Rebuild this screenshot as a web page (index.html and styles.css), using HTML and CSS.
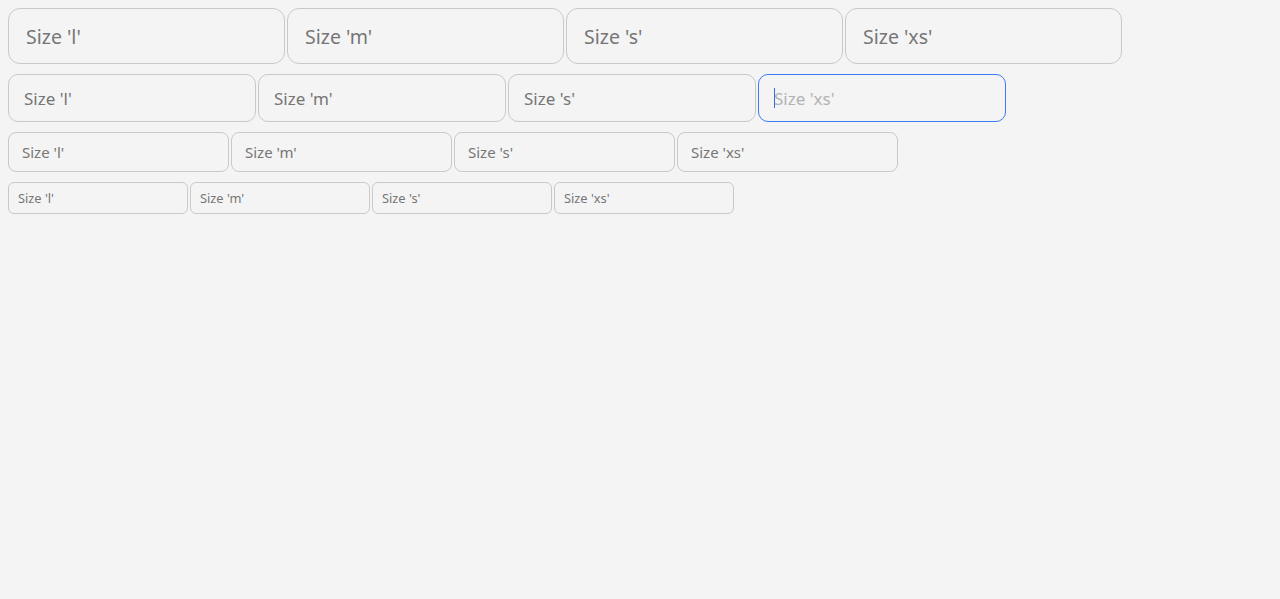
FILE: index.html
```html
<!DOCTYPE html>
<html>
<head>
<meta charset="utf-8">
<link rel="stylesheet" href="styles.css">
</head>
<body>
<div class="rows">
  <div class="row row-l">
    <input class="field" placeholder="Size 'l'">
    <input class="field" placeholder="Size 'm'">
    <input class="field" placeholder="Size 's'">
    <input class="field" placeholder="Size 'xs'">
  </div>
  <div class="row row-m">
    <input class="field" placeholder="Size 'l'">
    <input class="field" placeholder="Size 'm'">
    <input class="field" placeholder="Size 's'">
    <div class="wrap">
      <input class="field focused" placeholder="Size 'xs'">
      <span class="caret"></span>
    </div>
  </div>
  <div class="row row-s">
    <input class="field" placeholder="Size 'l'">
    <input class="field" placeholder="Size 'm'">
    <input class="field" placeholder="Size 's'">
    <input class="field" placeholder="Size 'xs'">
  </div>
  <div class="row row-xs">
    <input class="field" placeholder="Size 'l'">
    <input class="field" placeholder="Size 'm'">
    <input class="field" placeholder="Size 's'">
    <input class="field" placeholder="Size 'xs'">
  </div>
</div>
</body>
</html>
```
FILE: styles.css
```css
html, body {
  margin: 0;
  background: #f4f4f4;
}
body {
  padding: 8px;
  font-family: "Noto Sans", "Open Sans", sans-serif;
}
.rows {
  display: flex;
  flex-direction: column;
  gap: 10px;
}
.row {
  display: flex;
  gap: 2px;
}
.field {
  box-sizing: border-box;
  margin: 0;
  border: 1px solid #c9c9c9;
  background: #f4f4f4;
  font-family: inherit;
  color: #333;
  outline: none;
}
.field::placeholder {
  color: #767676;
  opacity: 1;
}
.row-l .field { width: 277px; height: 56px; border-radius: 12px; padding: 0 17px; font-size: 19.5px; }
.row-m .field { width: 248px; height: 48px; border-radius: 10px; padding: 0 15px; font-size: 17px; }
.row-s .field { width: 221px; height: 40px; border-radius: 8px; padding: 0 13px; font-size: 15px; }
.row-xs .field { width: 180px; height: 32px; border-radius: 6px; padding: 0 9px; font-size: 12.8px; }
.wrap {
  position: relative;
  display: flex;
}
.field.focused {
  border-color: #3b7cf6;
}
.field.focused::placeholder {
  color: #b3b3b3;
}
.caret {
  position: absolute;
  left: 16px;
  top: 14px;
  width: 1px;
  height: 20px;
  background: #2f6de8;
}
```
